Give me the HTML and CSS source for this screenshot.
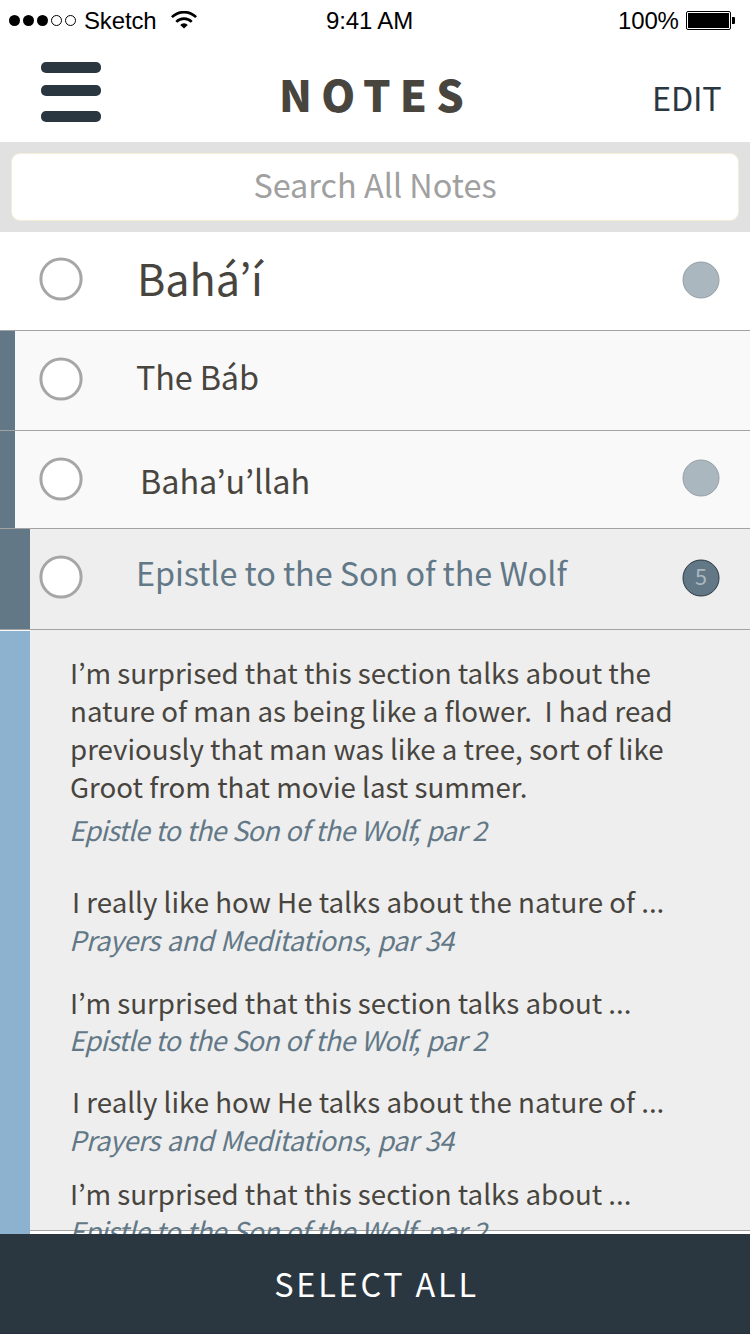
FILE: index.html
```html
<!DOCTYPE html>
<html lang="en">
<head>
<meta charset="utf-8">
<title>Notes</title>
<link rel="stylesheet" href="styles.css">
</head>
<body>
<div class="status">
  <svg class="signal" width="68" height="12" viewBox="0 0 68 12">
    <circle cx="5.5" cy="6.5" r="5.5"/><circle cx="19.5" cy="6.5" r="5.5"/><circle cx="33.5" cy="6.5" r="5.5"/>
    <g fill="none" stroke="#000"><circle cx="47.5" cy="6.5" r="5"/><circle cx="61.5" cy="6.5" r="5"/></g>
  </svg>
  <span class="carrier">Sketch</span>
  <svg class="wifi" width="26" height="18" viewBox="0 0 26 18">
    <path d="M13 17.6 L9.2 13.9 A5.4 5.4 0 0 1 16.8 13.9 Z"/>
    <g fill="none" stroke="#000" stroke-width="2.6"><path d="M5.3 10.9 A10.8 10.8 0 0 1 20.7 10.9"/><path d="M.9 6.2 A17 17 0 0 1 25.1 6.2"/></g>
  </svg>
  <span class="clock">9:41 AM</span>
  <span class="percent">100%</span>
  <svg class="battery" width="49" height="19" viewBox="0 0 49 19">
    <rect x=".5" y=".5" width="44" height="18" rx="1.5" fill="#fff" stroke="#000"/>
    <rect x="2" y="2" width="41" height="15"/>
    <path d="M46 6h2q1 0 1 1v5q0 1-1 1h-2z"/>
  </svg>
</div>
<header class="header">
  <div class="menu"><i class="bar"></i><i class="bar"></i><i class="bar"></i></div>
  <h1 class="title">NOTES</h1>
  <span class="edit">EDIT</span>
</header>
<div class="search"><div class="field"><span class="placeholder">Search All Notes</span></div></div>
<main>
  <div class="row row-root">
    <svg class="check" width="44" height="44"><circle cx="22" cy="22" r="20.1"/></svg>
    <span class="label">Bahá’í</span>
    <svg class="badge" width="38" height="38"><circle cx="19" cy="19" r="18"/></svg>
  </div>
  <div class="row row-bab">
    <svg class="check" width="44" height="44"><circle cx="22" cy="22" r="20.1"/></svg>
    <span class="label">The Báb</span>
  </div>
  <div class="row row-baha">
    <svg class="check" width="44" height="44"><circle cx="22" cy="22" r="20.1"/></svg>
    <span class="label">Baha’u’llah</span>
    <svg class="badge" width="38" height="38"><circle cx="19" cy="19" r="18"/></svg>
  </div>
  <div class="row row-epistle">
    <svg class="check" width="44" height="44"><circle cx="22" cy="22" r="20.1"/></svg>
    <span class="label">Epistle to the Son of the Wolf</span>
    <svg class="badge badge-on" width="38" height="38"><circle cx="19" cy="19" r="18"/><text x="19" y="26" text-anchor="middle">5</text></svg>
  </div>
  <div class="notes">
    <div class="strip"></div>
    <div class="list">
      <article class="note n1">
        <p class="text">I’m surprised that this section talks about the<br>nature of man as being like a flower.&nbsp; I had read<br>previously that man was like a tree, sort of like<br>Groot from that movie last summer.</p>
        <p class="cite">Epistle to the Son of the Wolf, par 2</p>
      </article>
      <article class="note n2">
        <p class="text">I really like how He talks about the nature of ...</p>
        <p class="cite cite-prayers">Prayers and Meditations, par 34</p>
      </article>
      <article class="note n3">
        <p class="text">I’m surprised that this section talks about ...</p>
        <p class="cite">Epistle to the Son of the Wolf, par 2</p>
      </article>
      <article class="note n4">
        <p class="text">I really like how He talks about the nature of ...</p>
        <p class="cite cite-prayers">Prayers and Meditations, par 34</p>
      </article>
      <article class="note n5">
        <p class="text">I’m surprised that this section talks about ...</p>
        <p class="cite">Epistle to the Son of the Wolf, par 2</p>
      </article>
    </div>
  </div>
</main>
<footer class="footer"><span class="select">SELECT ALL</span></footer>
</body>
</html>
```
FILE: styles.css
```css
* { box-sizing: border-box; margin: 0; padding: 0; }
body {
  width: 750px; height: 1334px; overflow: hidden; background: #fff;
  font-family: "Noto Sans CJK JP", "Noto Sans CJK SC", sans-serif;
  color: #48453f; white-space: nowrap;
}
svg { display: block; flex: none; }

.status {
  display: grid; grid-template-columns: 75px 87px 155px 292px 68px 49px;
  height: 40px; padding-left: 9px; align-items: start;
  font: 24px/28px "Liberation Sans", Arial, sans-serif; color: #000;
}
.status span { margin-top: 7px; letter-spacing: -.15px; }
.signal { margin-top: 14px; }
.wifi { margin-top: 11px; }
.battery { margin-top: 11px; }

.header { display: flex; height: 102px; padding: 22px 28px 0 41px; }
.menu { width: 60px; height: 60px; display: flex; flex-direction: column; justify-content: space-between; }
.bar { height: 11px; border-radius: 5px; background: #2a3741; }
.bar:nth-child(2) { margin-bottom: 3px; }
.title { margin-left: 178px; width: 373px; font-size: 43.2px; line-height: 62px; font-weight: 900; letter-spacing: 9.2px; }
.edit { margin-top: 11px; font-size: 32.4px; line-height: 48px; letter-spacing: -.2px; color: #2a3741; }

.search { height: 90px; padding: 11px; background: #e1e1e1; }
.field { height: 68px; border-radius: 9px; border: 1px solid #f3efd6; background: #fff; display: flex; justify-content: center; }
.placeholder { margin-top: 6px; font-size: 32.4px; line-height: 48px; color: #a0a0a0; }

.row { display: flex; align-items: flex-start; border-bottom: 1px solid #a3a3a3; background: #f9f9f9; }
.label { margin-left: 53px; font-size: 32.4px; line-height: 48px; letter-spacing: -.07px; width: 546px; }
.check { fill: #fff; stroke: #a6a6a6; stroke-width: 3; }
.badge { fill: #abb7bf; stroke: #959fa5; }
.badge-on { fill: #627887; stroke: #2a3741; }
.badge text { stroke: none; fill: #abb7bf; font-size: 21.6px; }

.row-root { height: 99px; padding-left: 39px; background: #fff; }
.row-root .check { margin-top: 25px; }
.row-root .label { margin-top: 15px; margin-left: 54px; width: 545px; font-size: 43.2px; line-height: 60px; }
.row-root .badge { margin-top: 29px; }
.row-bab { height: 100px; padding-left: 24px; }
.row-bab .check { margin-top: 26px; }
.row-bab .label { margin-top: 21px; letter-spacing: -.15px; }
.row-baha { height: 98px; padding-left: 24px; }
.row-baha .check { margin-top: 26px; }
.row-baha .label { margin-top: 25px; padding-left: 4px; }
.row-baha .badge { margin-top: 28px; }
.row-epistle { height: 101px; padding-left: 9px; background: #eee; }
.row-epistle .check { margin-top: 26px; }
.row-epistle .label { margin-top: 19px; color: #627887; }
.row-epistle .badge { margin-top: 30px; }
.row-bab::before, .row-baha::before, .row-epistle::before { content: ""; align-self: stretch; flex: none; width: 15px; background: #627887; margin-left: -24px; margin-right: 24px; }
.row-epistle::before { width: 30px; margin-left: -9px; margin-right: 9px; }

.notes {
  display: flex; height: 604px; overflow: hidden;
  background: linear-gradient(#eee 600px, #a3a3a3 600px, #a3a3a3 601px, #fff 601px);
}
.strip { width: 30px; background: #8db2d0; border-top: 1px solid #f9f9f9; }
.list { padding: 24px 0 0 40px; font-size: 27px; line-height: 38px; }
.text { margin: -1px 0 1px; font-size: 27.68px; }
.cite { font-style: italic; color: #627887; letter-spacing: -.72px; word-spacing: 1px; margin-left: -1px; }
.cite-prayers { letter-spacing: -.45px; }
.n1 .cite { margin-top: 6px; }
.n2 { margin-top: 34px; }
.n2 .text, .n4 .text { padding-left: 2px; }
.n3 { margin-top: 25px; }
.n3 .cite { margin-top: -1px; }
.n4 { margin-top: 24px; }
.n5 { margin-top: 16px; }
.n5 .cite { margin-top: -1px; }

.footer { height: 100px; background: #2a3741; border-bottom: 1px solid #262f3e; display: flex; justify-content: center; }
.select { margin-top: 25px; padding-left: 3px; font-size: 32.4px; line-height: 48px; letter-spacing: 2.8px; color: #fff; }
```
